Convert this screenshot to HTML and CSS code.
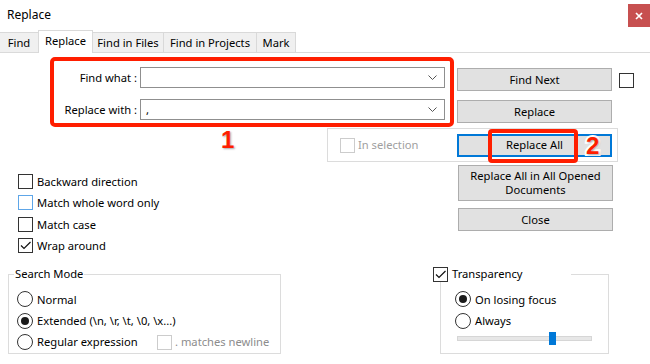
FILE: index.html
```html
<!DOCTYPE html>
<html lang="en">
<head>
<meta charset="utf-8">
<title>Replace</title>
<link rel="stylesheet" href="styles.css">
</head>
<body>
<div class="win">
  <div class="titlebar">
    <span class="title">Replace</span>
    <div class="close"><svg width="8" height="8" viewBox="0 0 8 8"><path d="M1 1L7 7M7 1L1 7" stroke="#fff" stroke-width="1.7"/></svg></div>
  </div>

  <div class="tabs">
    <div class="tab t-find">Find</div>
    <div class="tab t-replace sel">Replace</div>
    <div class="tab t-files">Find in Files</div>
    <div class="tab t-proj">Find in Projects</div>
    <div class="tab t-mark">Mark</div>
  </div>

  <div class="row1">
    <div class="redbox">
      <div class="field">
        <label>Find what :</label>
        <div class="combo"><span class="val"></span><svg class="chev" width="9" height="5" viewBox="0 0 9 5"><path d="M0.5 0.5L4.5 4.5L8.5 0.5" fill="none" stroke="#555" stroke-width="1"/></svg></div>
      </div>
      <div class="field">
        <label>Replace with :</label>
        <div class="combo"><span class="val">,</span><svg class="chev" width="9" height="5" viewBox="0 0 9 5"><path d="M0.5 0.5L4.5 4.5L8.5 0.5" fill="none" stroke="#555" stroke-width="1"/></svg></div>
      </div>
    </div>
    <div class="btncol top">
      <div class="btn">Find Next</div>
      <div class="btn">Replace</div>
    </div>
    <span class="cb sq"></span>
  </div>

  <div class="row2">
    <span class="num n1">1</span>
    <div class="selgroup">
      <span class="cb dis"></span>
      <span class="distext">In selection</span>
      <div class="btn default">Replace All
        <div class="redbox2"></div>
        <span class="num n2">2</span>
      </div>
    </div>
  </div>

  <div class="row3">
    <div class="opts">
      <div class="opt"><span class="cb"></span><span class="lbl">Backward direction</span></div>
      <div class="opt"><span class="cb hover"></span><span class="lbl">Match whole word only</span></div>
      <div class="opt"><span class="cb"></span><span class="lbl">Match case</span></div>
      <div class="opt"><span class="cb on"><svg width="13" height="13" viewBox="0 0 13 13"><path d="M2 6.5L5 9.5L11.5 3" fill="none" stroke="#111" stroke-width="1.2"/></svg></span><span class="lbl">Wrap around</span></div>
    </div>
    <div class="btncol">
      <div class="btn tall">Replace All in All Opened<br>Documents</div>
      <div class="btn">Close</div>
    </div>
  </div>

  <div class="row4">
    <fieldset class="grp mode">
      <legend>Search Mode</legend>
      <div class="opt"><span class="rd"></span><span class="lbl">Normal</span></div>
      <div class="opt"><span class="rd on"></span><span class="lbl">Extended (\n, \r, \t, \0, \x...)</span></div>
      <div class="opt"><span class="rd"></span><span class="lbl regex">Regular expression</span><span class="cb dis"></span><span class="distext nl">. matches newline</span></div>
    </fieldset>
    <fieldset class="grp transp">
      <legend><span class="cb on"><svg width="13" height="13" viewBox="0 0 13 13"><path d="M2 6.5L5 9.5L11.5 3" fill="none" stroke="#111" stroke-width="1.2"/></svg></span><span class="lbl">Transparency</span></legend>
      <div class="opt"><span class="rd on"></span><span class="lbl">On losing focus</span></div>
      <div class="opt"><span class="rd"></span><span class="lbl">Always</span></div>
      <div class="sliderrow"><div class="track"><div class="thumb"></div></div></div>
    </fieldset>
  </div>
</div>
</body>
</html>
```
FILE: styles.css
```css
* { box-sizing: border-box; }
body {
  margin: 0;
  background: #fff;
  font: 11.2px/1.2 "Noto Sans", sans-serif;
  color: #000;
}
.win { width: 650px; height: 364px; overflow: hidden; }

/* title bar */
.titlebar { height: 30px; display: flex; justify-content: space-between; align-items: flex-start; }
.title { font-size: 12px; line-height: 17px; margin: 6px 0 0 7px; }
.close {
  width: 22px; height: 23px; margin-top: 4px;
  background: #c75050;
  display: flex; align-items: center; justify-content: center;
}

/* tabs */
.tabs { display: flex; align-items: flex-end; height: 23px; border-bottom: 1px solid #dadada; }
.tab {
  height: 20px; margin-left: -1px;
  border: 1px solid #d9d9d9; border-bottom: none;
  background: #f0f0f0;
  display: flex; align-items: center; justify-content: center;
  white-space: nowrap;
}
.t-find { width: 39px; margin-left: 0; border-left: none; }
.t-replace { width: 55px; }
.t-files { width: 72px; }
.t-proj { width: 94px; }
.t-mark { width: 40px; }
.tab.sel { height: 23px; margin-bottom: -1px; background: #fff; position: relative; z-index: 1; padding-bottom: 3px; }

/* row 1 */
.row1 { display: flex; align-items: flex-start; }
.redbox {
  margin: 4px 0 0 50px; width: 404px; height: 70px;
  border: 4px solid #ff1e00; border-radius: 5px;
  padding: 6px 5px 0 0;
}
.field { display: flex; align-items: center; height: 21px; }
.field + .field { margin-top: 11px; }
.field label { width: 83px; margin-right: 3px; text-align: right; white-space: nowrap; }
.combo {
  width: 305px; height: 21px;
  border: 1px solid #8f8f8f; background: #fff;
  display: flex; align-items: center; padding-left: 5px;
}
.chev { margin-left: auto; margin-right: 7px; }

.btncol { display: flex; flex-direction: column; gap: 7px; width: 155px; }
.btncol.top { margin: 15px 0 0 3px; gap: 9px; }
.btn {
  height: 23px;
  background: #e1e1e1; border: 1px solid #adadad;
  display: flex; align-items: center; justify-content: center;
  text-align: center; line-height: 14px;
}
.btn.tall { height: 36px; }
.btn.default { width: 155px; margin-left: auto; border-color: #0078d7; box-shadow: inset 0 0 0 1px #0078d7; position: relative; }

/* checkboxes & radios */
.cb {
  width: 15px; height: 15px; flex: none;
  border: 1px solid #333; background: #fff;
  display: inline-flex; align-items: center; justify-content: center;
}
.cb.hover { border-color: #5ea6e8; }
.cb.dis { border-color: #cccccc; }
.cb.sq { margin: 20px 0 0 7px; }
.rd {
  width: 16px; height: 16px; flex: none;
  border: 1px solid #333; border-radius: 50%; background: #fff;
  display: inline-flex; align-items: center; justify-content: center;
}
.rd.on::after { content: ""; width: 8px; height: 8px; border-radius: 50%; background: #1a1a1a; }
.lbl { margin-left: 4px; white-space: nowrap; }
.distext { color: #a0a0a0; margin-left: 3px; white-space: nowrap; }

/* annotation numbers */
.num {
  font: bold 24px/22px "Liberation Sans", Arial, sans-serif;
  color: #ff1e00;
  -webkit-text-stroke: 4px #fff;
  paint-order: stroke fill;
  text-shadow: 1px 1px 2px rgba(0,0,0,0.35);
}
.n1 { width: 16px; margin-left: 221px; margin-top: 1px; }
.n2 { position: absolute; left: 128px; top: 0; }
.redbox2 {
  position: absolute; left: 30px; top: -6px; width: 90px; height: 34px;
  border: 4px solid #ff1e00; border-radius: 4px;
}

/* row 2 */
.row2 { display: flex; align-items: flex-start; margin-top: 1px; }
.selgroup {
  margin-left: 90px; width: 291px; height: 34px;
  border: 1px solid #dcdcdc;
  display: flex; align-items: center; padding: 0 5px 0 12px;
}

/* row 3 */
.row3 { display: flex; align-items: flex-start; margin-top: 3px; }
.opts { margin-left: 18px; width: 440px; padding-top: 6px; }
.opt { display: flex; align-items: center; height: 21.33px; }

/* row 4 */
.row4 { display: flex; align-items: stretch; margin-top: 10px; }
.grp {
  margin: 0; min-width: 0;
  border: 1px solid #dcdcdc;
  padding: 6.5px 0 0 8px;
}
.grp legend { padding: 0 1px; margin-left: -3px; line-height: 16px; height: 16px; }
.mode { margin-left: 8px; width: 273px; }
.regex { width: 120px; }
.nl { margin-left: 3px; color: #8c8c8c; }
.transp { margin-left: 159px; width: 169px; padding-left: 14px; }
.transp legend { display: flex; align-items: center; margin-left: -22px; padding: 0; width: 138px; }
.transp legend .lbl { margin-left: 4px; }
.sliderrow { height: 15px; display: flex; align-items: center; }
.track {
  position: relative;
  margin-left: 2px; width: 135px; height: 5px;
  background: #e7e7e7; border: 1px solid #d6d6d6;
}
.thumb {
  position: absolute; left: 91px; top: -5px;
  width: 7px; height: 13px; background: #0078d7;
}
```
